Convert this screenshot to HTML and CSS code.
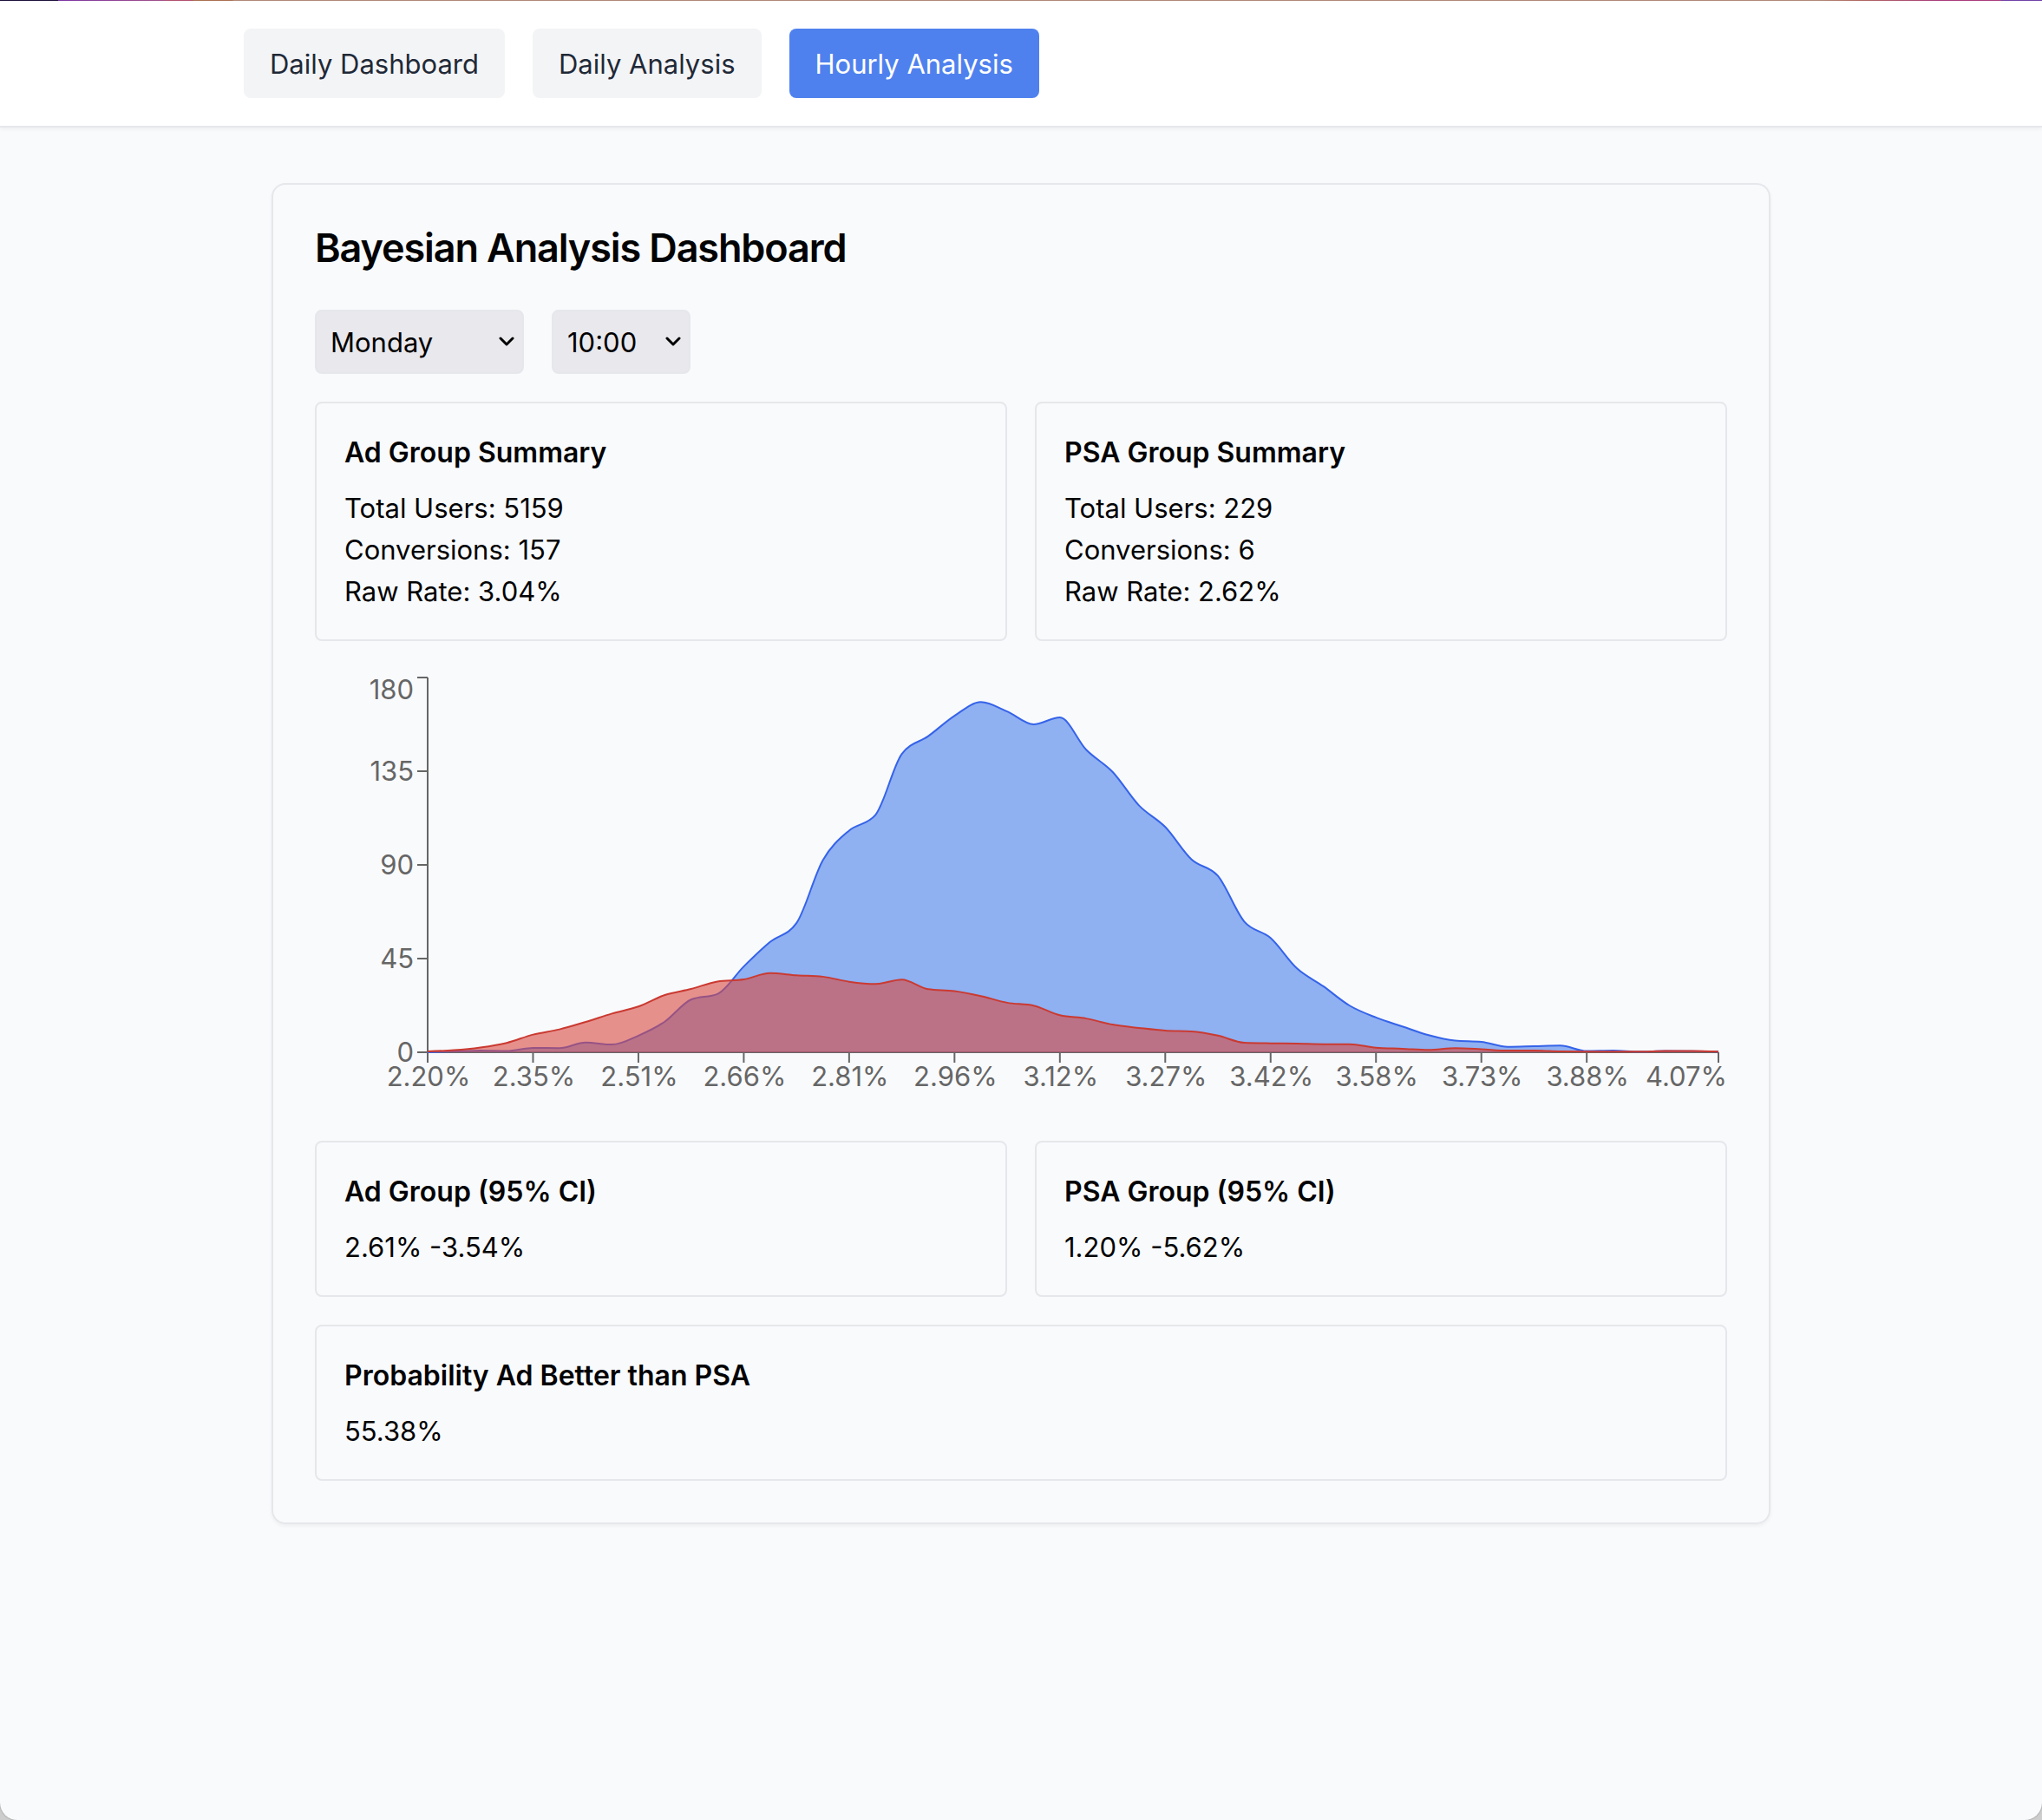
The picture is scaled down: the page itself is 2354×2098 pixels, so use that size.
FILE: index.html
```html
<!DOCTYPE html>
<html lang="en">
<head>
<meta charset="utf-8">
<meta name="viewport" content="width=device-width, initial-scale=1">
<title>Bayesian Analysis Dashboard</title>
<link rel="stylesheet" href="styles.css">
</head>
<body>
<div class="page">
  <nav class="nav">
    <div class="nav-inner">
      <button type="button" class="tab">Daily Dashboard</button>
      <button type="button" class="tab">Daily Analysis</button>
      <button type="button" class="tab tab-active" aria-current="page">Hourly Analysis</button>
    </div>
  </nav>
  <main class="main">
    <section class="panel">
      <h1 class="title">Bayesian Analysis Dashboard</h1>
      <div class="filters">
        <div class="select-wrap">
          <select class="select select-day" aria-label="Day">
            <option>Monday</option><option>Tuesday</option><option>Wednesday</option><option>Thursday</option><option>Friday</option><option>Saturday</option><option>Sunday</option>
          </select>
          <svg class="chevron" viewBox="0 0 18 12" aria-hidden="true"><path d="M2 2l7 7 7-7"/></svg>
        </div>
        <div class="select-wrap">
          <select class="select select-hour" aria-label="Hour">
            <option>9:00</option><option selected>10:00</option><option>11:00</option>
          </select>
          <svg class="chevron" viewBox="0 0 18 12" aria-hidden="true"><path d="M2 2l7 7 7-7"/></svg>
        </div>
      </div>
      <div class="grid">
        <article class="card">
          <h2 class="card-title">Ad Group Summary</h2>
          <p>Total Users: 5159</p>
          <p>Conversions: 157</p>
          <p>Raw Rate: 3.04%</p>
        </article>
        <article class="card">
          <h2 class="card-title">PSA Group Summary</h2>
          <p>Total Users: 229</p>
          <p>Conversions: 6</p>
          <p>Raw Rate: 2.62%</p>
        </article>
      </div>
      <svg class="chart" viewBox="0 0 1628 512" role="img" aria-label="Conversion rate distributions of the Ad and PSA groups">
        <g class="axis" id="axes"></g>
        <g class="labels" id="labels"></g>
        <path class="area area-ad" id="ad-area"/>
        <path class="line line-ad" id="ad-line"/>
        <path class="area area-psa" id="psa-area"/>
        <path class="line line-psa" id="psa-line"/>
      </svg>
      <div class="grid">
        <article class="card">
          <h2 class="card-title">Ad Group (95% CI)</h2>
          <p>2.61% -3.54%</p>
        </article>
        <article class="card">
          <h2 class="card-title">PSA Group (95% CI)</h2>
          <p>1.20% -5.62%</p>
        </article>
      </div>
      <article class="card">
        <h2 class="card-title">Probability Ad Better than PSA</h2>
        <p>55.38%</p>
      </article>
    </section>
  </main>
</div>
<script src="chart.js"></script>
</body>
</html>
```
FILE: styles.css
```css
* {
  box-sizing: border-box;
  margin: 0;
}

body {
  min-height: 100vh;
  display: flex;
  background: #cdcdcd;
  color: #020304;
  font-family: Inter, "Liberation Sans", sans-serif;
  font-size: 31px;
  line-height: 48px;
}

.page {
  flex: 1;
  background: #f9fafc;
  border-radius: 0 0 20px 20px;
  box-shadow: 0 0 2px #808080;
}

.nav {
  padding: 33px 32px 32px;
  border-bottom: 2px solid #e5e7eb;
  background:
    linear-gradient(90deg, #1d0f3a 0 67px, #7b35a5 67px, #a4508a 190px, #b0506f 191px 222px, #a9714f 223px 268px, #b08878 269px 89%, #b06860 91%, #a83c7c 95% 98%, #7040a8 98%) top / 100% 1px no-repeat,
    #fff;
  box-shadow: 0 2px 4px rgb(0 0 0 / 5%);
}

.nav-inner {
  display: flex;
  gap: 32px;
  max-width: 1792px;
  margin: 0 auto;
}

.tab {
  padding: 17px 30px 15px;
  border: 0;
  border-radius: 8px;
  background: #f3f4f6;
  color: #1f2937;
  font: inherit;
}

.tab-active {
  background: #4f81ee;
  color: #fff;
}

.main {
  max-width: 1792px;
  margin: 0 auto;
  padding: 64px 32px;
}

.panel {
  display: flex;
  flex-direction: column;
  gap: 32px;
  padding: 48px;
  border: 2px solid #e5e7eb;
  border-radius: 16px;
  box-shadow: 0 2px 4px rgb(0 0 0 / 5%);
}

.title {
  margin-bottom: 14px;
  font-size: 45px;
  font-weight: 600;
  line-height: 50px;
  letter-spacing: -0.025em;
}

.filters {
  display: flex;
  gap: 32px;
}

.select-wrap {
  display: grid;
  align-items: center;
}

.select,
.chevron {
  grid-area: 1 / 1;
}

.select {
  height: 74px;
  padding: 2px 16px 0;
  border: 2px solid #e5e7eb;
  border-radius: 8px;
  background: #e9e8ec;
  color: #000;
  font: inherit;
  appearance: none;
}

.select-day {
  width: 241px;
}

.select-hour {
  width: 160px;
}

.chevron {
  justify-self: end;
  width: 18px;
  margin-right: 11px;
  fill: none;
  stroke: #000;
  stroke-width: 3;
  stroke-linecap: round;
  stroke-linejoin: round;
  pointer-events: none;
}

.grid {
  display: grid;
  grid-template-columns: 1fr 1fr;
  gap: 32px;
}

.card {
  padding: 33px 32px 31px;
  border: 2px solid #e5e7eb;
  border-radius: 8px;
}

.card-title {
  margin-bottom: 16px;
  font-size: 32px;
  font-weight: 600;
}

.chart {
  display: block;
  width: 100%;
}

.axis {
  stroke: #666;
  stroke-width: 2;
}

.labels {
  fill: #666;
}

.area-ad {
  fill: #487fea;
  fill-opacity: 0.6;
}

.area-psa {
  fill: #d84941;
  fill-opacity: 0.6;
}

.line {
  fill: none;
  stroke-width: 2;
}

.line-ad {
  stroke: #3563e9;
}

.line-psa {
  stroke: #ca3a31;
}
```
FILE: chart.js
```js
const ad = [0, 0.4, 0.8, 0.6, 2.1, 2, 4.7, 3.7, 8, 14.7, 25.3, 28, 41.2, 53, 62, 92.2, 106.5, 114, 143.3, 151.8, 161.6, 168.2, 163.7, 157.5, 160.8, 145.3, 134.7, 118.6, 108.2, 92.6, 84.7, 62.8, 54.9, 40.3, 31.7, 22.4, 16.7, 12.4, 8.2, 5.6, 5, 2.6, 2.9, 3.2, 0.6, 0.8, 0.3, 0.6, 0.5, 0.3];
const psa = [0.4, 1, 2.3, 4.5, 8.5, 11, 14.6, 18.6, 22, 27.5, 30.4, 34, 35, 38, 37, 36.3, 33.9, 32.8, 34.9, 30.3, 29.4, 27, 23.8, 22.4, 17.8, 16.2, 13.3, 11.7, 10.4, 10, 8, 4.6, 4.3, 4.2, 3.9, 3.9, 2.2, 1.7, 1.1, 2, 1.5, 0.8, 0.8, 0.4, 0.3, 0.3, 0.3, 0.6, 0.6, 0.3];
const rates = ["2.20%", "2.35%", "2.51%", "2.66%", "2.81%", "2.96%", "3.12%", "3.27%", "3.42%", "3.58%", "3.73%", "3.88%"];

const plot = { left: 130, right: 1618, top: 10, bottom: 442, max: 180 };
const step = (plot.right - plot.left) / (ad.length - 1);
const px = (i) => plot.left + i * step;
const py = (v) => plot.bottom - (v / plot.max) * (plot.bottom - plot.top);

// Monotone cubic interpolation through evenly spaced points.
function curve(values) {
  const y = values.map(py);
  const n = y.length;
  const s = [];
  for (let i = 0; i < n - 1; i++) s.push((y[i + 1] - y[i]) / step);
  const m = new Array(n);
  for (let i = 1; i < n - 1; i++) {
    const a = s[i - 1], b = s[i];
    m[i] = (Math.sign(a) + Math.sign(b)) * Math.min(Math.abs(a), Math.abs(b), Math.abs(a + b) / 4);
  }
  m[0] = (3 * s[0] - m[1]) / 2;
  m[n - 1] = (3 * s[n - 2] - m[n - 2]) / 2;
  let d = `M${px(0)},${y[0]}`;
  for (let i = 1; i < n; i++) {
    d += `C${px(i - 1) + step / 3},${y[i - 1] + m[i - 1] * step / 3},${px(i) - step / 3},${y[i] - m[i] * step / 3},${px(i)},${y[i]}`;
  }
  return d;
}

function draw(name, values) {
  const d = curve(values);
  document.getElementById(name + "-line").setAttribute("d", d);
  document.getElementById(name + "-area").setAttribute("d", `${d}L${plot.right},${plot.bottom}L${plot.left},${plot.bottom}Z`);
}

function add(parent, tag, attrs, text) {
  const el = document.createElementNS("http://www.w3.org/2000/svg", tag);
  for (const key in attrs) el.setAttribute(key, attrs[key]);
  if (text) el.textContent = text;
  document.getElementById(parent).appendChild(el);
}

function line(x1, y1, x2, y2) {
  add("axes", "line", { x1, y1, x2, y2 });
}

line(plot.left, plot.top, plot.left, plot.bottom);
line(plot.left, plot.bottom, plot.right, plot.bottom);
[0, 45, 90, 135, 180].forEach((v) => {
  line(plot.left - 12, py(v), plot.left, py(v));
  // The top label is lowered so that it stays inside the chart.
  const center = Math.max(py(v), 24);
  add("labels", "text", { x: plot.left - 16, y: center + 11, "text-anchor": "end" }, String(v));
});
rates.forEach((rate, k) => {
  line(px(k * 4), plot.bottom, px(k * 4), plot.bottom + 12);
  add("labels", "text", { x: px(k * 4) + 1, y: 481, "text-anchor": "middle" }, rate);
});
line(plot.right, plot.bottom, plot.right, plot.bottom + 12);
add("labels", "text", { x: 1628, y: 481, "text-anchor": "end" }, "4.07%");

draw("ad", ad);
draw("psa", psa);
```
